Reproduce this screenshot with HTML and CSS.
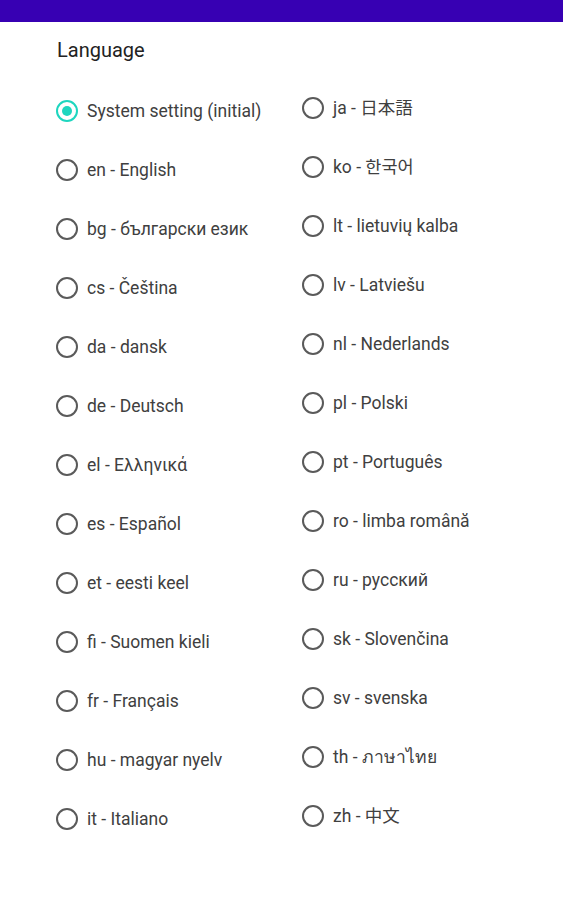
FILE: index.html
```html
<!DOCTYPE html>
<html>
<head>
<meta charset="utf-8">
<link rel="stylesheet" href="styles.css">
</head>
<body>
<div class="appbar"></div>
<main class="content">
  <div class="title">Language</div>
  <div class="columns">
    <div class="col col-left">
      <div class="row"><span class="radio checked"></span><span class="label">System setting (initial)</span></div>
      <div class="row"><span class="radio"></span><span class="label">en - English</span></div>
      <div class="row"><span class="radio"></span><span class="label">bg - български език</span></div>
      <div class="row"><span class="radio"></span><span class="label">cs - Čeština</span></div>
      <div class="row"><span class="radio"></span><span class="label">da - dansk</span></div>
      <div class="row"><span class="radio"></span><span class="label">de - Deutsch</span></div>
      <div class="row"><span class="radio"></span><span class="label">el - Ελληνικά</span></div>
      <div class="row"><span class="radio"></span><span class="label">es - Español</span></div>
      <div class="row"><span class="radio"></span><span class="label">et - eesti keel</span></div>
      <div class="row"><span class="radio"></span><span class="label">fi - Suomen kieli</span></div>
      <div class="row"><span class="radio"></span><span class="label">fr - Français</span></div>
      <div class="row"><span class="radio"></span><span class="label">hu - magyar nyelv</span></div>
      <div class="row"><span class="radio"></span><span class="label">it - Italiano</span></div>
    </div>
    <div class="col col-right">
      <div class="row"><span class="radio"></span><span class="label">ja - 日本語</span></div>
      <div class="row"><span class="radio"></span><span class="label">ko - 한국어</span></div>
      <div class="row"><span class="radio"></span><span class="label">lt - lietuvių kalba</span></div>
      <div class="row"><span class="radio"></span><span class="label">lv - Latviešu</span></div>
      <div class="row"><span class="radio"></span><span class="label">nl - Nederlands</span></div>
      <div class="row"><span class="radio"></span><span class="label">pl - Polski</span></div>
      <div class="row"><span class="radio"></span><span class="label">pt - Português</span></div>
      <div class="row"><span class="radio"></span><span class="label">ro - limba română</span></div>
      <div class="row"><span class="radio"></span><span class="label">ru - русский</span></div>
      <div class="row"><span class="radio"></span><span class="label">sk - Slovenčina</span></div>
      <div class="row"><span class="radio"></span><span class="label">sv - svenska</span></div>
      <div class="row"><span class="radio"></span><span class="label">th - ภาษาไทย</span></div>
      <div class="row"><span class="radio"></span><span class="label">zh - 中文</span></div>
    </div>
  </div>
</main>
</body>
</html>
```
FILE: styles.css
```css
html, body {
  margin: 0;
  padding: 0;
  background: #ffffff;
}
body {
  font-family: Roboto, "Noto Sans", "Noto Sans CJK JP", "Noto Sans CJK KR", sans-serif;
  width: 563px;
  height: 900px;
  overflow: hidden;
}
.appbar {
  height: 22px;
  background: #3700b3;
}
.content {
  padding-left: 56px;
}
.title {
  margin-top: 17px;
  height: 22px;
  line-height: 22px;
  font-size: 20px;
  color: #222222;
  padding-left: 1px;
}
.columns {
  display: grid;
  grid-template-columns: 246px 1fr;
  margin-top: 20px;
}
.col {
  display: flex;
  flex-direction: column;
}
.col-right {
  margin-top: -3px;
}
.row {
  height: 59px;
  display: flex;
  align-items: center;
  gap: 9px;
}
.radio {
  width: 18px;
  height: 18px;
  border: 2px solid #5a5a5a;
  border-radius: 50%;
  flex: none;
  position: relative;
  box-sizing: content-box;
}
.radio.checked {
  border-color: #1ed6bf;
}
.radio.checked::after {
  content: "";
  position: absolute;
  left: 4px;
  top: 4px;
  width: 10px;
  height: 10px;
  border-radius: 50%;
  background: #1ed6bf;
}
.label {
  font-size: 17.5px;
  color: #404040;
  white-space: nowrap;
  line-height: 22px;
}
```
